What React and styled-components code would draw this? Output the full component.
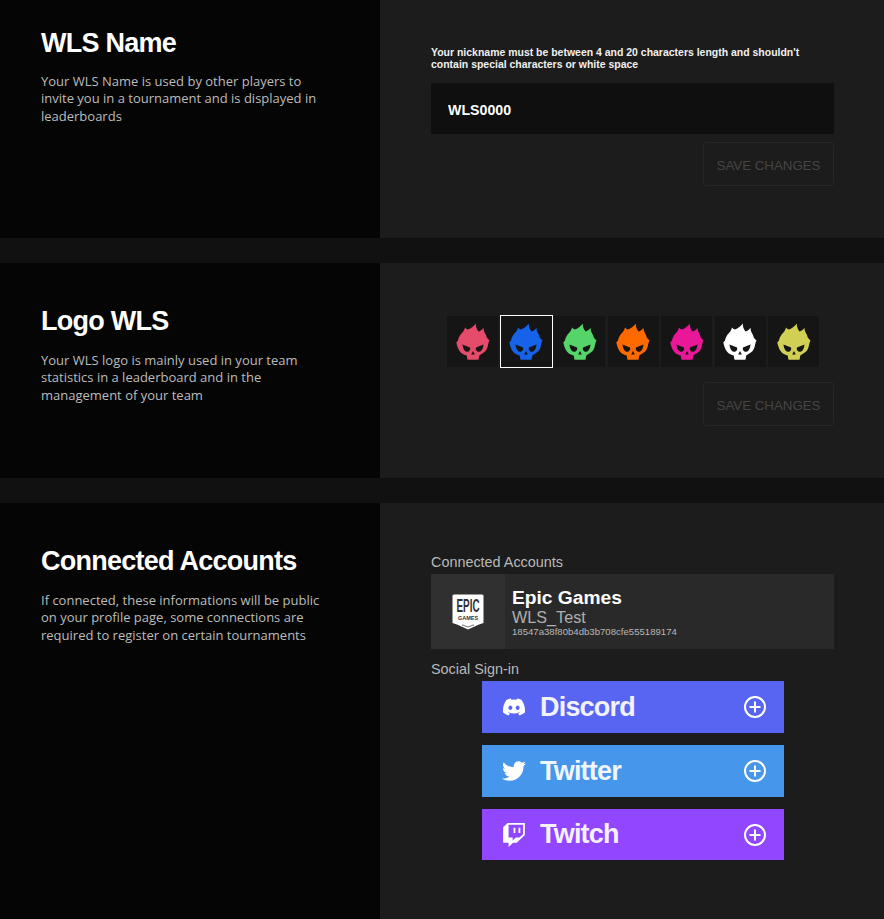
import React from 'react';
import styled, { createGlobalStyle } from 'styled-components';
import { FaDiscord, FaTwitter, FaTwitch } from 'react-icons/fa';

const GlobalStyle = createGlobalStyle`
  html, body {
    margin: 0;
    padding: 0;
    background: #111111;
  }
  * {
    box-sizing: border-box;
  }
`;

const Page = styled.div`
  width: 884px;
  height: 919px;
  overflow: hidden;
  display: flex;
  flex-direction: column;
  gap: 25px;
  background: #111111;
  font-family: 'Liberation Sans', Arial, sans-serif;
`;

const Section = styled.section`
  display: grid;
  grid-template-columns: 380px 1fr;
  height: ${props => props.$height}px;
  flex: none;
`;

const Side = styled.div`
  background: #050505;
  padding: ${props => props.$top}px 60px 0 41px;
`;

const Heading = styled.h2`
  margin: 0;
  color: #ffffff;
  font-family: 'Liberation Sans', Arial, sans-serif;
  font-size: 27px;
  line-height: 32px;
  font-weight: 700;
  letter-spacing: -0.75px;
`;

const Description = styled.p`
  margin: ${props => props.$gap || 14}px 0 0;
  color: #bcbcbc;
  font-family: 'Open Sans', sans-serif;
  font-size: 13px;
  line-height: 17.3px;
`;

const Main = styled.div`
  background: #1c1c1c;
  padding: ${props => props.$top}px 50px 0 51px;
  display: flex;
  flex-direction: column;
`;

const Hint = styled.div`
  color: #f0f0f0;
  font-size: 10.48px;
  line-height: 12px;
  font-weight: 700;
`;

const NameField = styled.input`
  display: block;
  width: 100%;
  height: 51px;
  margin-top: 12px;
  padding: 2px 17px 0;
  border: 0;
  outline: 0;
  background: #0f0f0f;
  color: #ffffff;
  font-family: 'Liberation Sans', Arial, sans-serif;
  font-size: 14.2px;
  font-weight: 700;
`;

const SaveButton = styled.button`
  align-self: flex-end;
  width: 131px;
  height: 44px;
  margin-top: ${props => props.$gap}px;
  padding: 2px 0 0;
  background: transparent;
  border: 1px solid #262626;
  border-radius: 3px;
  color: #454545;
  font-family: 'Liberation Sans', Arial, sans-serif;
  font-size: 13.3px;
`;

const LogoRow = styled.div`
  display: flex;
  justify-content: center;
  gap: 2.5px;
  padding-left: 1px;
`;

const LogoTile = styled.div`
  width: 51px;
  height: 51px;
  display: flex;
  align-items: center;
  justify-content: center;
  background: #151515;
  outline: ${props => (props.$selected ? '1px solid #ffffff' : 'none')};
`;

const Label = styled.div`
  color: #b9b9b9;
  font-size: 14.4px;
  line-height: 16px;
`;

const AccountCard = styled.div`
  display: flex;
  height: 75px;
  margin-top: 4px;
  background: #292929;
`;

const AccountLogo = styled.div`
  width: 74px;
  display: flex;
  align-items: center;
  justify-content: center;
  background: #313031;
`;

const AccountText = styled.div`
  padding: 13px 0 0 7px;
  display: flex;
  flex-direction: column;
`;

const AccountName = styled.div`
  color: #ffffff;
  font-size: 19.2px;
  line-height: 21px;
  font-weight: 700;
`;

const AccountUser = styled.div`
  color: #b0b0b0;
  font-size: 16.2px;
  line-height: 18px;
`;

const AccountId = styled.div`
  color: #b8b8b8;
  font-size: 9.6px;
  line-height: 11px;
`;

const SocialLabel = styled(Label)`
  margin-top: 12px;
`;

const SocialList = styled.div`
  display: flex;
  flex-direction: column;
  gap: 12px;
  margin-top: 4px;
  padding: 0 50px 0 51px;
`;

const SocialButton = styled.div`
  height: ${props => props.$height || 52}px;
  padding: 0 17px 0 20px;
  display: flex;
  align-items: center;
  background: ${props => props.$color};
  color: #ffffff;
`;

const SocialIcon = styled.span`
  width: 38px;
  display: flex;
  align-items: center;
  font-size: 24px;
`;

const SocialName = styled.span`
  flex: 1;
  font-family: 'Liberation Sans', Arial, sans-serif;
  font-size: 27px;
  font-weight: 700;
  letter-spacing: -0.8px;
  opacity: 0.92;
`;

const SkullLogo = ({ color }) => (
  <svg width="34" height="38" viewBox="0 0 34 38">
    <path
      fill={color}
      d="M20 0.5 C19.5 3 20.5 6 22.5 8.5 C24.5 8 26.5 6.5 27.5 4.8 C27.5 7.5 28.5 10 30 12 C30.5 14 31 15.5 33.5 17.5 C32.5 19 32.5 20.5 32 22 C31.5 25 30.5 27.5 28.5 29 C26.5 30.5 24.5 31.5 23.3 32.5 L22.5 36.8 L11.5 36.8 L10.7 32.5 C8.5 31.8 6 31 4.8 29.5 C3 27.5 2 25.5 1.2 23 L0.3 19.5 L2 17.5 C2.5 14.5 4 12 6 10 C7.5 8.5 8.5 6.5 9 4.5 C10 5.5 11 6.5 12 6.5 C15 5.5 18 3 20 0.5 Z"
    />
    <path fill="#151515" d="M6.5 21.5 L14 24.5 C14.8 27 13 29 10.8 28.8 C8.2 28.5 6.8 25 6.5 21.5 Z" />
    <path fill="#151515" d="M27.5 21.5 L20 24.5 C19.2 27 21 29 23.2 28.8 C25.8 28.5 27.2 25 27.5 21.5 Z" />
    <path fill="#151515" d="M17 28 L18.8 31.5 L15.2 31.5 Z" />
  </svg>
);

const EpicLogo = () => (
  <svg width="32" height="36" viewBox="0 0 32 36">
    <path
      fill="#ffffff"
      d="M2 0.5 H30 A1.5 1.5 0 0 1 31.5 2 V29 L27 30.5 L16 35.5 L5 30.5 L0.5 29 V2 A1.5 1.5 0 0 1 2 0.5 Z"
    />
    <text
      transform="translate(16 18) scale(0.52 1)"
      textAnchor="middle"
      fill="#313031"
      fontFamily="'Liberation Sans', sans-serif"
      fontSize="19"
      fontWeight="700"
    >
      EPIC
    </text>
    <text
      x="16"
      y="26"
      textAnchor="middle"
      fill="#313031"
      fontFamily="'Liberation Sans', sans-serif"
      fontSize="5.5"
      fontWeight="700"
    >
      GAMES
    </text>
    <path d="M10 30.8 L16 33 L22 30.8" fill="none" stroke="#313031" strokeWidth="0.7" />
  </svg>
);

const PlusCircle = () => (
  <svg width="24" height="24" viewBox="0 0 24 24" fill="none" stroke="#ffffff" strokeWidth="2">
    <circle cx="12" cy="12" r="10" />
    <path d="M12 6.5 V17.5 M6.5 12 H17.5" />
  </svg>
);

const logos = ['#e54b6b', '#1662e8', '#55d469', '#ff6a00', '#ea1899', '#ffffff', '#d2cf55'];

const socials = [
  { name: 'Discord', color: '#5865f2', Icon: FaDiscord },
  { name: 'Twitter', color: '#4696ec', Icon: FaTwitter },
  { name: 'Twitch', color: '#9146ff', Icon: FaTwitch, height: 51 },
];

const App = () => (
  <Page>
    <GlobalStyle />
    <Section $height={238}>
      <Side $top={27}>
        <Heading>WLS Name</Heading>
        <Description>
          Your WLS Name is used by other players to invite you in a tournament and is displayed in
          leaderboards
        </Description>
      </Side>
      <Main $top={47}>
        <Hint>
          Your nickname must be between 4 and 20 characters length and shouldn't contain special
          characters or white space
        </Hint>
        <NameField readOnly value="WLS0000" />
        <SaveButton $gap={8} disabled>SAVE CHANGES</SaveButton>
      </Main>
    </Section>

    <Section $height={215}>
      <Side $top={42}>
        <Heading>Logo WLS</Heading>
        <Description $gap={15}>
          Your WLS logo is mainly used in your team statistics in a leaderboard and in the
          management of your team
        </Description>
      </Side>
      <Main $top={53}>
        <LogoRow>
          {logos.map((color, i) => (
            <LogoTile key={color} $selected={i === 1}>
              <SkullLogo color={color} />
            </LogoTile>
          ))}
        </LogoRow>
        <SaveButton $gap={15} disabled>SAVE CHANGES</SaveButton>
      </Main>
    </Section>

    <Section $height={416}>
      <Side $top={42}>
        <Heading>Connected Accounts</Heading>
        <Description $gap={15}>
          If connected, these informations will be public on your profile page, some connections
          are required to register on certain tournaments
        </Description>
      </Side>
      <Main $top={51}>
        <Label>Connected Accounts</Label>
        <AccountCard>
          <AccountLogo>
            <EpicLogo />
          </AccountLogo>
          <AccountText>
            <AccountName>Epic Games</AccountName>
            <AccountUser>WLS_Test</AccountUser>
            <AccountId>18547a38f80b4db3b708cfe555189174</AccountId>
          </AccountText>
        </AccountCard>
        <SocialLabel>Social Sign-in</SocialLabel>
        <SocialList>
          {socials.map(({ name, color, Icon, height }) => (
            <SocialButton key={name} $color={color} $height={height}>
              <SocialIcon>
                <Icon />
              </SocialIcon>
              <SocialName>{name}</SocialName>
              <PlusCircle />
            </SocialButton>
          ))}
        </SocialList>
      </Main>
    </Section>
  </Page>
);

export default App;
